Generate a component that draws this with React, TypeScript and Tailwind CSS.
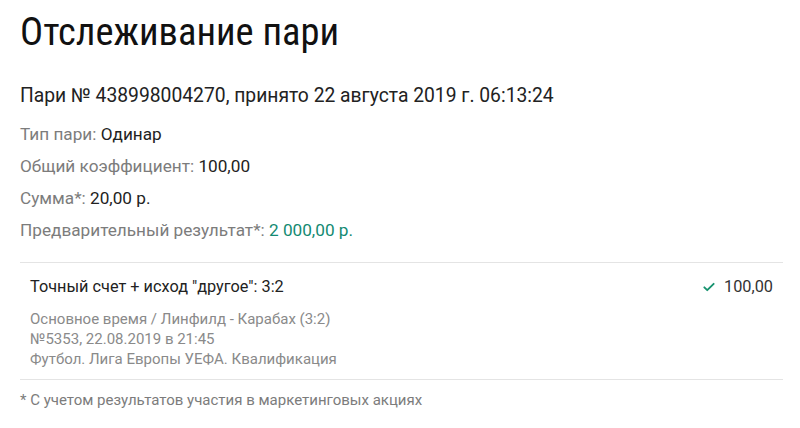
export default function App() {
  return (
    <div
      className="w-[800px] h-[428px] bg-white text-[#212121] px-5 pt-[10px]"
      style={{ fontFamily: "Roboto, 'Noto Sans', sans-serif" }}
    >
      <h1 className="text-[38.5px] leading-[44px] font-normal text-[#111] font-stretch-semi-condensed">
        Отслеживание пари
      </h1>

      <div className="mt-[30px] text-[19.3px] leading-6 text-[#222]">
        Пари № 438998004270, принято 22 августа 2019 г. 06:13:24
      </div>

      <div className="mt-[10px] flex flex-col text-[17.2px] leading-[32px]">
        <div>
          <span className="text-[#7c7c7c]">Тип пари: </span>
          <span className="text-[#222]">Одинар</span>
        </div>
        <div>
          <span className="text-[#7c7c7c]">Общий коэффициент: </span>
          <span className="text-[#222]">100,00</span>
        </div>
        <div>
          <span className="text-[#7c7c7c]">Сумма*: </span>
          <span className="text-[#222]">20,00 р.</span>
        </div>
        <div>
          <span className="text-[#7c7c7c]">Предварительный результат*: </span>
          <span className="text-[#138a72]">2 000,00 р.</span>
        </div>
      </div>

      <div className="mt-[16px] border-t border-b border-[#e4e4e4] px-[10px] pt-[12px] pb-[10px] w-[763px]">
        <div className="flex items-center justify-between text-[16.3px] leading-6 text-[#222]">
          <span>Точный счет + исход "другое": 3:2</span>
          <span className="flex items-center gap-[8px]">
            <svg width="14" height="14" viewBox="0 0 24 24" fill="none" stroke="#17936f" strokeWidth="3.2" strokeLinecap="round" strokeLinejoin="round">
              <path d="M4 12.5l5 5L20 6.5" />
            </svg>
            <span className="text-[#333]">100,00</span>
          </span>
        </div>
        <div className="mt-[10px] flex flex-col text-[15px] leading-[20px] text-[#8a8a8a]">
          <span>Основное время / Линфилд - Карабах (3:2)</span>
          <span>№5353, 22.08.2019 в 21:45</span>
          <span>Футбол. Лига Европы УЕФА. Квалификация</span>
        </div>
      </div>

      <div className="mt-[10px] text-[15px] leading-5 text-[#7c7c7c]">
        * С учетом результатов участия в маркетинговых акциях
      </div>
    </div>
  );
}
